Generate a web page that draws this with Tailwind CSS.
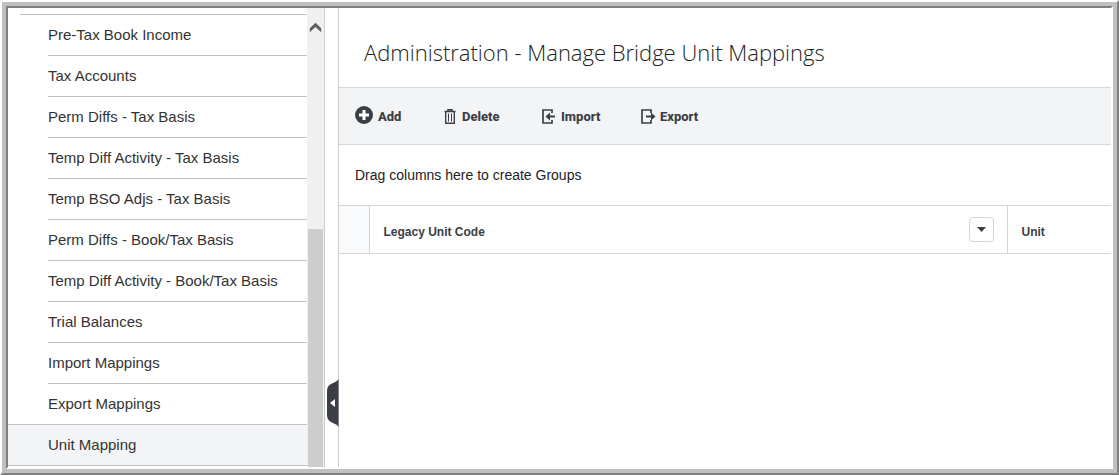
<!DOCTYPE html>
<html lang="en">
<head>
<meta charset="utf-8">
<title>Administration - Manage Bridge Unit Mappings</title>
<script src="https://cdn.jsdelivr.net/npm/@tailwindcss/browser@4"></script>
</head>
<body class="bg-white font-['Liberation_Sans',Arial,sans-serif] text-[#333333]">
<div class="h-screen border-2 border-t-white border-l-white border-r-[#808080] border-b-[#808080]">
<div class="h-full border-4 border-[#c0c0c0]">
<div class="flex h-full overflow-hidden border-2 border-t-[#808080] border-l-[#808080] border-r-white border-b-white">

  <aside class="flex w-[317px] shrink-0 border-r border-[#cccccc]">
    <nav class="min-w-0 flex-1 overflow-hidden pt-1.5 text-[15px] leading-10" aria-label="Sections">
      <div class="ml-3 border-t border-[#c1c1c6]"></div>
      <ul>
        <li class="ml-10 border-b border-[#c1c1c6]"><a href="#" class="block">Pre-Tax Book Income</a></li>
        <li class="ml-10 border-b border-[#c1c1c6]"><a href="#" class="block">Tax Accounts</a></li>
        <li class="ml-10 border-b border-[#c1c1c6]"><a href="#" class="block">Perm Diffs - Tax Basis</a></li>
        <li class="ml-10 border-b border-[#c1c1c6]"><a href="#" class="block">Temp Diff Activity - Tax Basis</a></li>
        <li class="ml-10 border-b border-[#c1c1c6]"><a href="#" class="block">Temp BSO Adjs - Tax Basis</a></li>
        <li class="ml-10 border-b border-[#c1c1c6]"><a href="#" class="block">Perm Diffs - Book/Tax Basis</a></li>
        <li class="ml-10 border-b border-[#c1c1c6]"><a href="#" class="block">Temp Diff Activity - Book/Tax Basis</a></li>
        <li class="ml-10 border-b border-[#c1c1c6]"><a href="#" class="block">Trial Balances</a></li>
        <li class="ml-10 border-b border-[#c1c1c6]"><a href="#" class="block">Import Mappings</a></li>
        <li class="ml-10"><a href="#" class="block">Export Mappings</a></li>
        <li class="border-y border-[#c1c1c6] bg-[#f3f4f6]"><a href="#" class="block pl-10" aria-current="page">Unit Mapping</a></li>
      </ul>
    </nav>
    <div class="flex w-[17px] shrink-0 flex-col bg-[#f0f0f0]">
      <button type="button" aria-label="Scroll up" class="flex h-[221px] items-start justify-center pt-3.5">
        <svg width="13" height="11" viewBox="0 0 13 11" fill="#606060"><path d="M6.500 .8 12.200 6.200V10.200L6.500 5 .8 10.200V6.200Z"/></svg>
      </button>
      <div class="mx-px flex-1 bg-[#cdcdcd]"></div>
    </div>
  </aside>

  <div class="flex w-3.5 shrink-0 flex-col justify-end border-r border-[#cccccc] pb-10">
    <button type="button" aria-label="Collapse menu" class="-mr-px ml-0.5 h-12">
      <svg width="12" height="48" viewBox="0 0 12 48"><path d="M11.500 0V48L10 46 4 43Q0 41 0 36V12Q0 7 4 5L10 2Z" fill="#3b3e46"/><path d="M3 24 8 20V28Z" fill="#fff"/></svg>
    </button>
  </div>

  <main class="min-w-0 flex-1">
    <h1 class="pt-2.5 pl-[25px] font-['Open_Sans','Noto_Sans',sans-serif] text-[22px] leading-[69px] font-light text-[#222222]">Administration - Manage Bridge Unit Mappings</h1>
    <div class="flex h-[58px] items-center border-y border-[#d5d7d8] bg-[#f3f4f6] pl-4 font-[Roboto,'Noto_Sans',sans-serif] text-[13px] font-extrabold text-[#3b3e46]" role="toolbar">
      <button type="button" class="flex w-[89px] items-center gap-1">
        <svg width="19" height="20" viewBox="0 0 19 20"><circle cx="9" cy="9" r="9" fill="#3b3e46"/><path d="M9 4v10M4 9h10" stroke="#fff" stroke-width="3"/></svg><span class="pt-0.5">Add</span></button>
      <button type="button" class="flex w-[98px] items-center gap-1.5">
        <svg width="12" height="15" viewBox="0 0 12 15" fill="none" stroke="#3b3e46"><path d="M4 2V.7h4V2M.5 2.500h11" stroke-width="1.400"/><path d="M1.700 3v11.300h8.600V3" stroke-width="1.400"/><path d="M4.500 4.500v8M7.500 4.500v8"/></svg><span class="pt-0.5">Delete</span></button>
      <button type="button" class="flex w-[99px] items-center gap-1.5">
        <svg width="13" height="15" viewBox="0 0 13 15"><path d="M10 4V1H1v13h9v-3" fill="none" stroke="#3b3e46" stroke-width="1.700"/><path d="M3.500 7.500 8 3.500v3h5v2H8v3Z" fill="#3b3e46"/></svg><span class="pt-0.5">Import</span></button>
      <button type="button" class="flex items-center gap-1">
        <svg width="15" height="15" viewBox="0 0 15 15"><path d="M10 4V1H1v13h9v-3" fill="none" stroke="#3b3e46" stroke-width="1.700"/><path d="M14.500 7.500 10 3.500v3H5v2h5v3Z" fill="#3b3e46"/></svg><span class="pt-0.5">Export</span></button>
    </div>
    <p class="pl-4 text-sm leading-[60px] text-[#222222]">Drag columns here to create Groups</p>
    <table class="w-full table-fixed border-collapse border-y border-[#d5d5d5] text-left text-xs text-[#3b3e46]">
      <colgroup><col class="w-[30px]"><col><col class="w-[104px]"></colgroup>
      <thead>
        <tr class="h-12">
          <td class="border-r border-[#d5d5d5] bg-[#f9fafb]"></td>
          <th scope="col" class="border-r border-[#d5d5d5] p-0 pr-[13px] pl-3.5">
            <div class="flex items-center justify-between"><span class="pt-1">Legacy Unit Code</span>
              <button type="button" aria-label="Column options" class="flex size-[25px] items-center justify-center rounded border border-[#d5d5d5]">
                <svg width="9" height="5" viewBox="0 0 9 5"><path d="M0 0h9L4.500 5Z" fill="#3b3e46"/></svg>
              </button></div>
          </th>
          <th scope="col" class="p-0 pt-1 pl-3.5">Unit</th>
        </tr>
      </thead>
    </table>
  </main>
</div>
</div>
</div>
</body>
</html>
